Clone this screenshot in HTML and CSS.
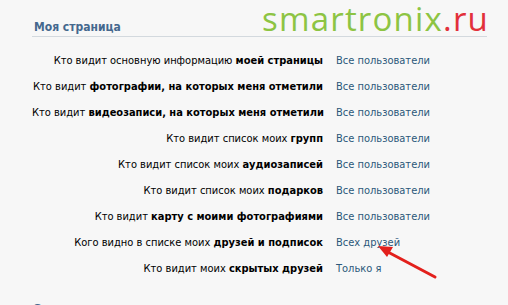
FILE: index.html
```html
<!DOCTYPE html>
<html lang="ru">
<head>
<meta charset="utf-8">
<link rel="stylesheet" href="styles.css">
</head>
<body>
<div class="page">
  <h2 class="section-title">Моя страница</h2>
  <div class="settings">
    <div class="label">Кто видит основную информацию <b>моей страницы</b></div><div class="value">Все пользователи</div>
    <div class="label">Кто видит <b>фотографии, на которых меня отметили</b></div><div class="value">Все пользователи</div>
    <div class="label">Кто видит <b>видеозаписи, на которых меня отметили</b></div><div class="value">Все пользователи</div>
    <div class="label">Кто видит список моих <b>групп</b></div><div class="value">Все пользователи</div>
    <div class="label">Кто видит список моих <b>аудиозаписей</b></div><div class="value">Все пользователи</div>
    <div class="label">Кто видит список моих <b>подарков</b></div><div class="value">Все пользователи</div>
    <div class="label">Кто видит <b>карту с моими фотографиями</b></div><div class="value">Все пользователи</div>
    <div class="label">Кого видно в списке моих <b>друзей и подписок</b></div><div class="value">Всех друзей</div>
    <div class="label">Кто видит моих <b>скрытых друзей</b></div><div class="value">Только я</div>
  </div>
  <h2 class="section-title next">Записи на странице</h2>
  <div class="watermark"><span class="wm-green">smartronix</span><span class="wm-red">.ru</span></div>
  <svg class="arrow" width="70" height="40" viewBox="0 0 70 40">
    <line x1="59" y1="35" x2="10" y2="9" stroke="#e3201c" stroke-width="3" stroke-linecap="round"/>
    <polygon points="2,4 17,5 11,15" fill="#e3201c"/>
  </svg>
</div>
</body>
</html>
```

FILE: styles.css
```css
html, body {
  margin: 0;
  padding: 0;
  background: #f7f7f7;
}
.page {
  position: relative;
  width: 508px;
  height: 305px;
  overflow: hidden;
  padding: 20px 21px 0 32px;
  box-sizing: border-box;
  font-family: "DejaVu Sans Condensed", "DejaVu Sans", Tahoma, sans-serif;
  font-stretch: semi-condensed;
}
.section-title {
  margin: 0;
  padding: 0 0 2px 2px;
  font-size: 12px;
  font-weight: bold;
  color: #45688e;
  border-bottom: 1px solid #d3d9de;
  line-height: 14px;
}
.section-title.next {
  margin-top: 26px;
  border-bottom: none;
}
.settings {
  display: grid;
  grid-template-columns: 291px auto;
  column-gap: 13px;
  row-gap: 12px;
  padding-top: 17px;
  font-size: 11px;
  line-height: 14px;
}
.label {
  text-align: right;
  color: #000;
  white-space: nowrap;
}
.value {
  color: #2b587a;
  white-space: nowrap;
}
.watermark {
  position: absolute;
  left: 262px;
  top: -3px;
  font-family: "Open Sans", sans-serif;
  font-stretch: normal;
  font-size: 33px;
  letter-spacing: 1.2px;
  line-height: 44px;
  white-space: nowrap;
}
.wm-green { color: #8dc443; }
.wm-red { color: #e2303b; }
.arrow {
  position: absolute;
  left: 376px;
  top: 242px;
}
```
